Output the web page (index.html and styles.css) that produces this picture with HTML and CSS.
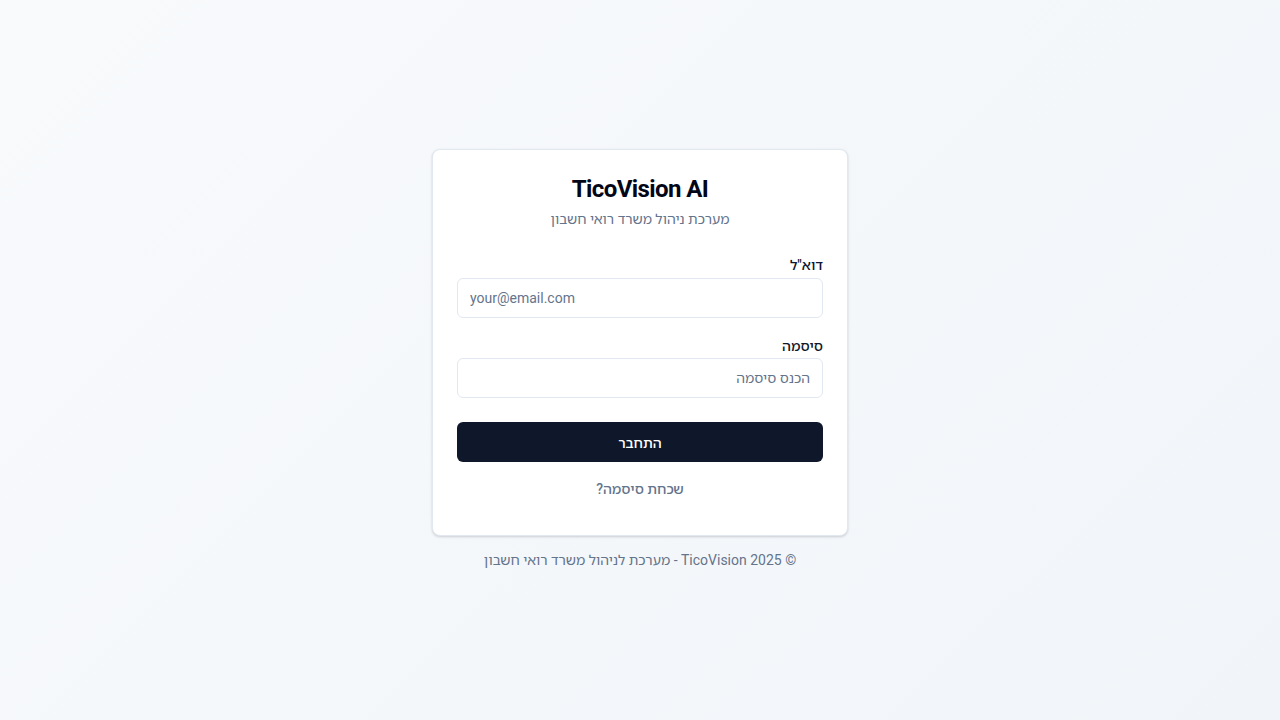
FILE: index.html
```html
<!DOCTYPE html>
<html lang="he" dir="rtl">
<head>
<meta charset="utf-8">
<title>TicoVision AI</title>
<link rel="stylesheet" href="styles.css">
</head>
<body>
<main class="page">
  <div class="wrap">
    <section class="card">
      <header class="card-header">
        <h1 class="title">TicoVision AI</h1>
        <p class="subtitle">מערכת ניהול משרד רואי חשבון</p>
      </header>
      <form class="form">
        <div class="field">
          <label class="label" for="email">דוא"ל</label>
          <input class="input input-ltr" id="email" type="email" placeholder="your@email.com" dir="ltr">
        </div>
        <div class="field">
          <label class="label" for="password">סיסמה</label>
          <input class="input" id="password" type="password" placeholder="הכנס סיסמה">
        </div>
        <button class="btn" type="button">התחבר</button>
        <a class="link" href="#">שכחת סיסמה?</a>
      </form>
    </section>
    <p class="footer">© 2025 TicoVision - מערכת לניהול משרד רואי חשבון</p>
  </div>
</main>
</body>
</html>
```
FILE: styles.css
```css
* { box-sizing: border-box; }
html, body { margin: 0; padding: 0; }
body {
  font-family: Roboto, "Noto Sans Hebrew", "Noto Sans", sans-serif;
  background: linear-gradient(135deg, #f8fafc 0%, #f1f5f9 100%);
  min-height: 100vh;
  color: #0f172a;
}
.page {
  min-height: 100vh;
  display: flex;
  align-items: center;
  justify-content: center;
}
.wrap {
  display: flex;
  flex-direction: column;
  align-items: center;
  gap: 14px;
}
.card {
  width: 416px;
  background: #fff;
  border: 1px solid #e2e8f0;
  border-radius: 8px;
  box-shadow: 0 1px 3px rgba(15, 23, 42, 0.12), 0 1px 2px rgba(15, 23, 42, 0.06);
  padding: 25px 24px 36px;
}
.card-header { text-align: center; }
.title {
  margin: 0;
  font-size: 24px;
  line-height: 28px;
  font-weight: 700;
  color: #020617;
  letter-spacing: -0.6px;
}
.subtitle {
  margin: 6px 0 0;
  font-size: 14px;
  line-height: 20px;
  color: #64748b;
}
.form {
  margin-top: 29px;
  display: flex;
  flex-direction: column;
}
.field {
  display: flex;
  flex-direction: column;
  margin-bottom: 21px;
}
.field + .field { margin-bottom: 24px; }
.label {
  font-size: 14px;
  line-height: 14px;
  font-weight: 500;
  color: #0f172a;
  margin-bottom: 6px;
}
.field + .field .label { margin-bottom: 5px; }
.input {
  height: 40px;
  width: 100%;
  border: 1px solid #e2e8f0;
  border-radius: 6px;
  padding: 0 12px;
  font-family: inherit;
  font-size: 14px;
  color: #0f172a;
  background: #fff;
  outline: none;
}
.input::placeholder { color: #64748b; }
.input-ltr { text-align: left; }
.btn {
  height: 40px;
  width: 100%;
  border: none;
  border-radius: 6px;
  background: #0f172a;
  color: #fff;
  font-family: inherit;
  font-size: 14px;
  font-weight: 500;
  cursor: pointer;
}
.link {
  margin-top: 17px;
  align-self: center;
  font-size: 14px;
  line-height: 20px;
  font-weight: 500;
  color: #64748b;
  text-decoration: none;
}
.footer {
  margin: 0 0 1px;
  font-size: 14px;
  line-height: 20px;
  color: #64748b;
}
```
